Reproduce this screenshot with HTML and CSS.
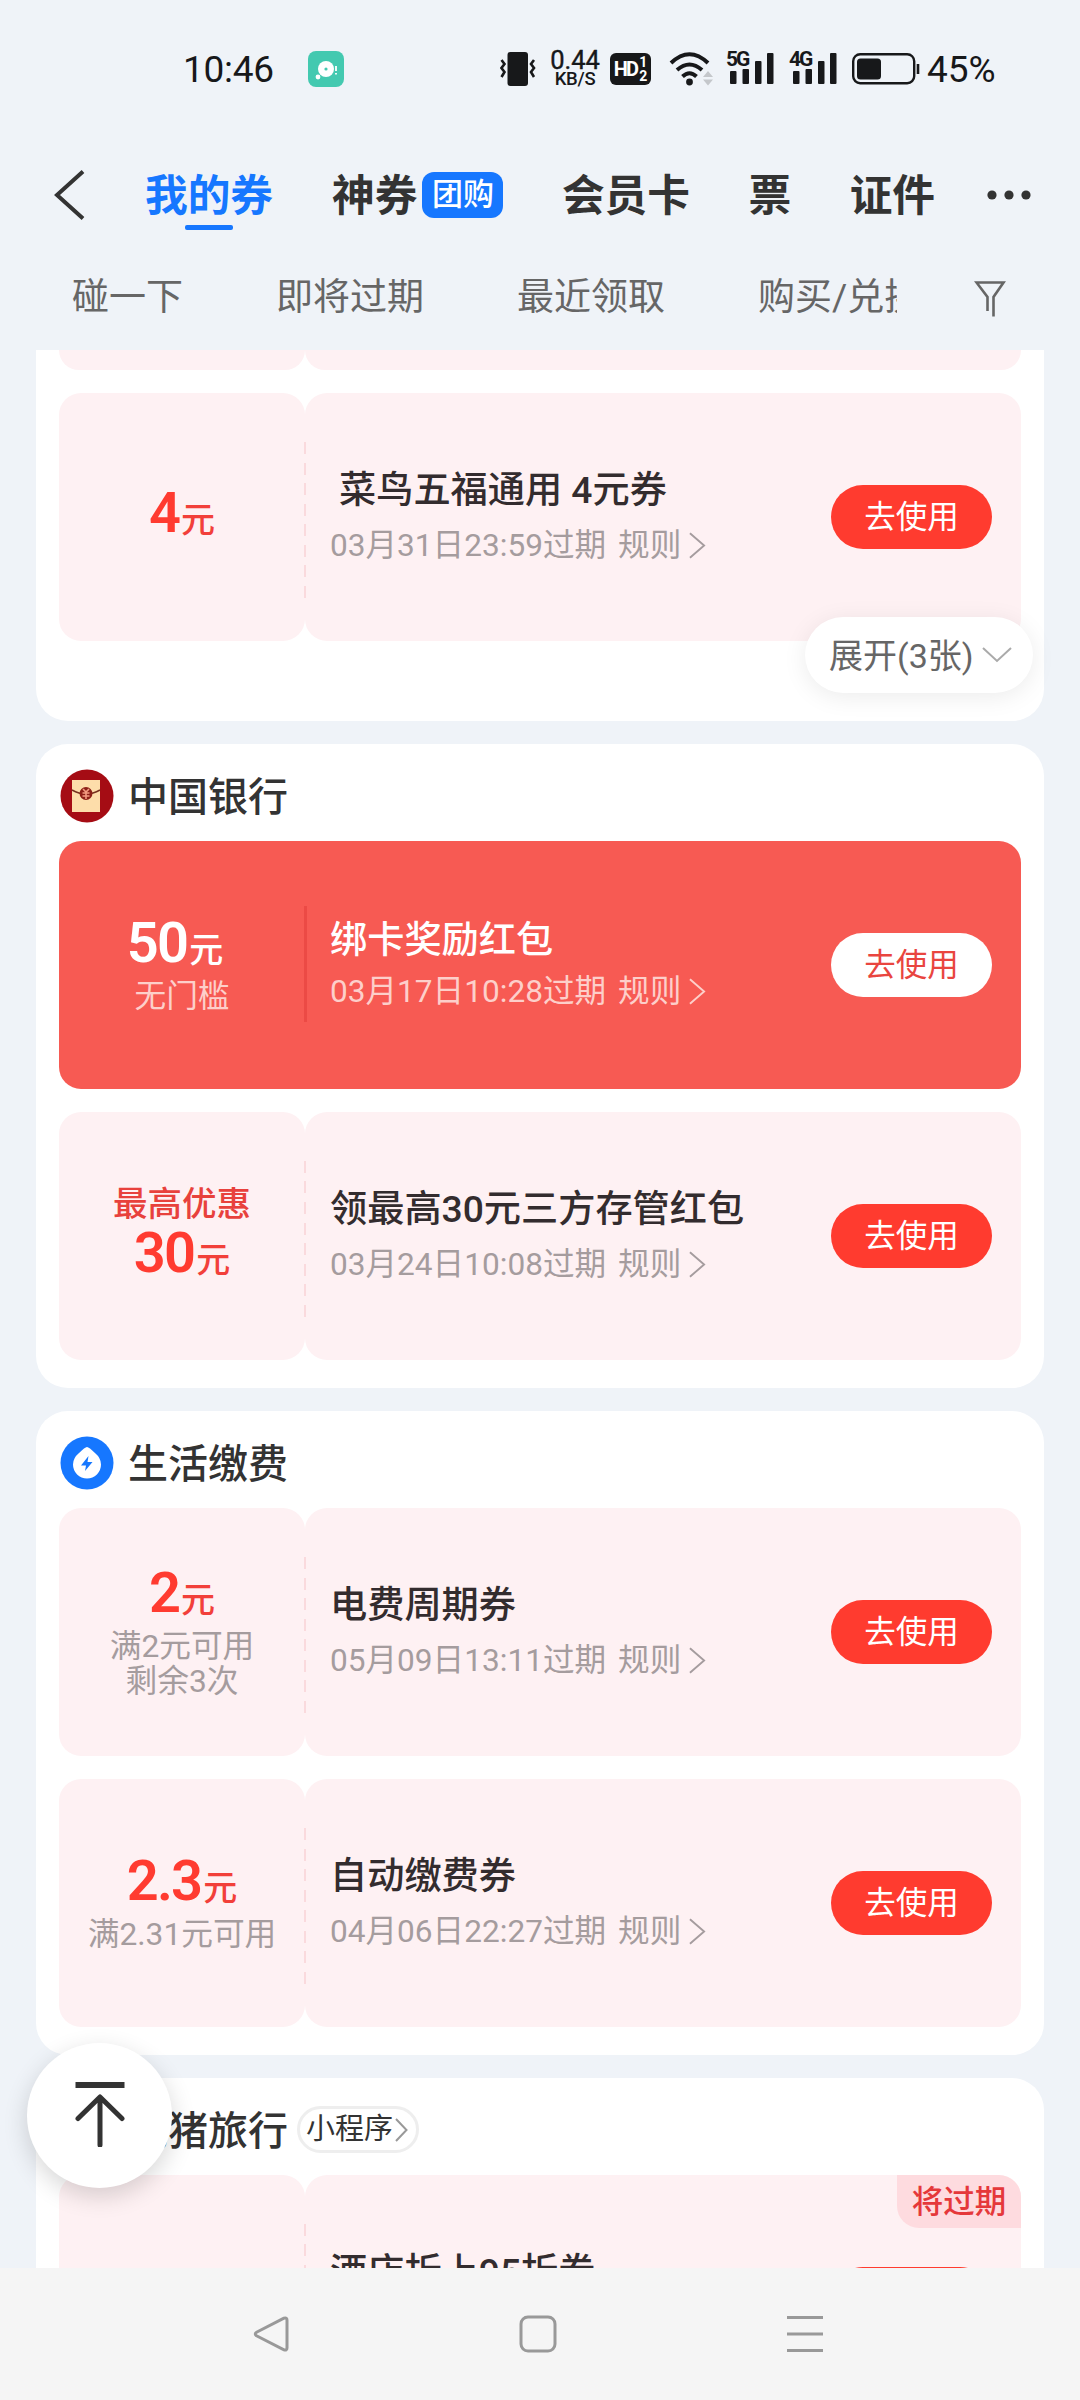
FILE: index.html
```html
<!DOCTYPE html>
<html lang="zh-CN">
<head>
<meta charset="utf-8">
<title>我的券</title>
<link rel="stylesheet" href="styles.css">
</head>
<body>
<div class="screen">
  <header class="status">
    <span class="clock">10:46</span>
    <svg class="app-icon" width="36" height="36" viewBox="0 0 36 36"><rect width="36" height="36" rx="8" fill="#43c9b0"/><circle cx="18" cy="18" r="8" fill="#fff"/><circle cx="18" cy="18" r="1.600" fill="#43c9b0"/><circle cx="10" cy="26" r="2.400" fill="#fff"/><path d="M28 15v5M28 22v1.500" stroke="#fff" stroke-width="1.800"/></svg>
    <svg class="vibrate" width="36" height="36" viewBox="0 0 36 36" fill="none" stroke="#17181a" stroke-width="2.600"><rect x="7.500" y="1" width="20.500" height="34" rx="3" fill="#17181a" stroke="none"/><path d="M1.500 9l3 4-3 4 3 4-3 5M34 9l-3 4 3 4-3 4 3 5"/></svg>
    <span class="speed"><b>0.44</b><i>KB/S</i></span>
    <span class="hd"><b>HD</b><span><i>1</i><i>2</i></span></span>
    <svg class="wifi" width="46" height="36" viewBox="0 0 46 36" fill="none" stroke="#17181a" stroke-width="4"><path d="M2 12Q20.500-5.500 39 12M8 19Q20.500 8 33 19M13.500 25.500Q20.500 19 27.500 25.500"/><circle cx="20.500" cy="31" r="3.400" fill="#17181a" stroke="none"/><path d="M34 26h10l-5-6zM34 28.500h10l-5 6z" fill="#c4c7cb" stroke="none"/></svg>
    <span class="signal"><b>5G</b><svg width="44" height="31" viewBox="0 0 44 31" fill="#17181a"><rect y="18" width="6.500" height="13" rx="1"/><rect x="12.500" y="16" width="6.500" height="15" rx="1"/><rect x="25" y="8" width="6.500" height="23" rx="1"/><rect x="37" width="6.500" height="31" rx="1"/></svg></span>
    <span class="signal"><b>4G</b><svg width="44" height="31" viewBox="0 0 44 31" fill="#17181a"><rect y="18" width="6.500" height="13" rx="1"/><rect x="12.500" y="16" width="6.500" height="15" rx="1"/><rect x="25" y="8" width="6.500" height="23" rx="1"/><rect x="37" width="6.500" height="31" rx="1"/></svg></span>
    <svg class="battery" width="68" height="32" viewBox="0 0 68 32"><rect x="1.200" y="1.200" width="61" height="29" rx="7" fill="none" stroke="#17181a" stroke-width="2.400"/><rect x="5" y="5.500" width="24" height="21" rx="3.500" fill="#17181a"/><path d="M66 11v10" stroke="#17181a" stroke-width="2.600"/></svg>
    <span class="percent">45%</span>
  </header>

  <nav class="nav">
    <svg class="back" width="32" height="50" viewBox="0 0 32 50" fill="none" stroke="#333" stroke-width="4"><path d="M29 1.500L3 25l26 23.500"/></svg>
    <span class="nav-item active">我的券</span>
    <span class="nav-item deals">神券</span>
    <span class="badge">团购</span>
    <span class="nav-item member">会员卡</span>
    <span class="nav-item ticket">票</span>
    <span class="nav-item cert">证件</span>
    <svg class="more" width="44" height="10" viewBox="0 0 44 10" fill="#333"><circle cx="5" cy="5" r="4.600"/><circle cx="22" cy="5" r="4.600"/><circle cx="39" cy="5" r="4.600"/></svg>
  </nav>

  <div class="tabs">
    <span>碰一下</span><span>即将过期</span><span>最近领取</span><span class="cut">购买/兑换</span>
    <svg class="filter" width="32" height="38" viewBox="0 0 32 38" fill="none" stroke="#666" stroke-width="2.600"><path d="M13.500 31V17L2.500 2.500h27L19.500 17v19.500"/></svg>
  </div>

  <main class="list">
    <section class="card card-first">
      <div class="coupon stub"><div class="value"></div><div class="detail"></div></div>
      <div class="coupon">
        <div class="value"><p class="price">4<small>元</small></p></div>
        <div class="detail">
          <div class="info"><h3 class="indent">菜鸟五福通用 4元券</h3><p class="rule">03月31日23:59过期 <span>规则</span><svg width="17" height="27" viewBox="0 0 18 28"><path d="M1 1l15 13L1 27"/></svg></p></div>
          <a class="use">去使用</a>
        </div>
      </div>
      <div class="expand">展开(3张)<svg width="30" height="16" viewBox="0 0 30 16"><path d="M1 1l14 13L29 1"/></svg></div>
    </section>

    <section class="card">
      <h2 class="brand"><svg width="54" height="54" viewBox="0 0 54 54"><circle cx="27" cy="27" r="26.500" fill="#a50c14"/><path d="M12 11h28v32H12z" fill="#fdddaa"/><path d="M12 21q7 4 14 4t14-4" fill="none" stroke="#75301e" stroke-width="1.500"/><circle cx="26" cy="24.500" r="6.500" fill="#8d2018"/><path d="M23 20l3 3 3-3M26 22v8M22.500 24h7M22.500 27h7" fill="none" stroke="#f29b80" stroke-width="1.600"/></svg>中国银行</h2>
      <div class="coupon solid">
        <div class="value"><p class="price shifted">50<small>元</small></p><p class="note">无门槛</p></div>
        <div class="detail">
          <div class="info"><h3>绑卡奖励红包</h3><p class="rule">03月17日10:28过期 <span>规则</span><svg width="17" height="27" viewBox="0 0 18 28"><path d="M1 1l15 13L1 27"/></svg></p></div>
          <a class="use">去使用</a>
        </div>
      </div>
      <div class="coupon">
        <div class="value"><p class="lead">最高优惠</p><p class="price">30<small>元</small></p></div>
        <div class="detail">
          <div class="info"><h3>领最高30元三方存管红包</h3><p class="rule">03月24日10:08过期 <span>规则</span><svg width="17" height="27" viewBox="0 0 18 28"><path d="M1 1l15 13L1 27"/></svg></p></div>
          <a class="use">去使用</a>
        </div>
      </div>
    </section>

    <section class="card">
      <h2 class="brand"><svg width="54" height="54" viewBox="0 0 54 54"><circle cx="27" cy="27" r="26.500" fill="#1677ff"/><path d="M27 11q2 0 8 6 6 5 6 11.500a14 14 0 0 1-28 0q0-6.500 6-11.500 6-6 8-6z" fill="#fff"/><path d="M28.500 20l-7.500 9.500h5l-1 5.500 7.500-9h-5z" fill="#1677ff"/></svg>生活缴费</h2>
      <div class="coupon">
        <div class="value"><p class="price">2<small>元</small></p><p class="note">满2元可用<br>剩余3次</p></div>
        <div class="detail">
          <div class="info"><h3>电费周期券</h3><p class="rule">05月09日13:11过期 <span>规则</span><svg width="17" height="27" viewBox="0 0 18 28"><path d="M1 1l15 13L1 27"/></svg></p></div>
          <a class="use">去使用</a>
        </div>
      </div>
      <div class="coupon">
        <div class="value"><p class="price">2.3<small>元</small></p><p class="note">满2.31元可用</p></div>
        <div class="detail">
          <div class="info"><h3>自动缴费券</h3><p class="rule">04月06日22:27过期 <span>规则</span><svg width="17" height="27" viewBox="0 0 18 28"><path d="M1 1l15 13L1 27"/></svg></p></div>
          <a class="use">去使用</a>
        </div>
      </div>
    </section>

    <section class="card">
      <h2 class="brand"><svg width="54" height="54" viewBox="0 0 54 54"><circle cx="27" cy="27" r="26.500" fill="#ffc900"/></svg>飞猪旅行<span class="mini">小程序<svg width="13" height="24" viewBox="0 0 13 24"><path d="M1 1l10.500 11L1 23"/></svg></span></h2>
      <div class="coupon">
        <div class="value"></div>
        <div class="detail">
          <div class="info"><h3>酒店折上95折券</h3><p class="rule">&nbsp;</p></div>
          <a class="use"></a>
          <span class="tag">将过期</span>
        </div>
      </div>
    </section>

    <a class="to-top"><svg width="52" height="66" viewBox="0 0 52 66" fill="none" stroke="#333" stroke-width="5"><path d="M1.500 4h49" stroke-width="6"/><path d="M26 64V17M4 37.500L26 16l22 21.500" stroke-linecap="round" stroke-linejoin="round"/></svg></a>
  </main>

  <footer class="sysbar">
    <svg width="36" height="38" viewBox="0 0 36 38"><path d="M31 3.200L4 17q-3.500 2 0 4L31 34.800q3 1 3-2V5.200q0-3-3-2z"/></svg>
    <svg width="38" height="38" viewBox="0 0 38 38"><rect x="2" y="2" width="34" height="34" rx="7"/></svg>
    <svg width="36" height="38" viewBox="0 0 36 38"><path d="M0 2.500h36M0 19h36M0 35.500h36"/></svg>
  </footer>
</div>
</body>
</html>
```
FILE: styles.css
```css
* { box-sizing: border-box; margin: 0; padding: 0; }
body { background: #eff3f8; font-family: Roboto, "Noto Sans CJK SC", sans-serif; }
i { font-style: normal; }
.screen { width: 1080px; height: 2400px; overflow: hidden; display: flex; flex-direction: column; background: #eff3f8; }

/* system status bar */
.status { height: 137px; flex: none; display: flex; align-items: center; padding-left: 183px; color: #17181a; }
.status svg { flex: none; }
.clock { width: 125px; font-size: 37px; letter-spacing: -0.300px; padding-top: 2px; }
.vibrate { margin-left: 156px; }
.speed { margin-left: 13px; width: 52px; display: flex; flex-direction: column; align-items: center; padding-top: 1px; }
.speed b { font-size: 25.500px; line-height: 20px; font-weight: 400; -webkit-text-stroke: 0.400px #17181a; }
.speed i { font-size: 18.500px; line-height: 18px; font-weight: 500; letter-spacing: -0.300px; }
.hd { margin-left: 9px; width: 41px; height: 32px; border-radius: 6px; background: #17181a; color: #fff; display: flex; align-items: center; justify-content: center; gap: 2px; }
.hd b { font-size: 20px; line-height: 30px; font-weight: 700; letter-spacing: -1.800px; }
.hd span { display: flex; flex-direction: column; }
.hd i { font-size: 14px; line-height: 14px; font-weight: 700; }
.wifi { margin-left: 18px; }
.signal { position: relative; width: 44px; height: 31px; margin-left: 15px; }
.signal + .signal { margin-left: 19px; }
.signal b { position: absolute; left: -4px; top: -3px; font-size: 21px; line-height: 18px; font-weight: 700; letter-spacing: -2px; }
.battery { margin-left: 15px; }
.percent { margin-left: 7px; font-size: 37px; letter-spacing: 0; padding-top: 2px; }

/* top navigation */
.nav { height: 115px; flex: none; display: flex; align-items: center; padding-left: 54px; color: #333; }
.nav-item { font-size: 42.700px; line-height: 58px; font-weight: 700; white-space: nowrap; padding-top: 3px; }
.active { position: relative; margin-left: 59px; color: #1677ff; }
.active::after { content: ""; position: absolute; left: 40px; bottom: -5px; width: 48px; height: 5px; border-radius: 2px; background: #1677ff; }
.deals { margin-left: 59px; }
.badge { margin-left: 5px; width: 81px; height: 46px; border-radius: 12px; background: #1677ff; color: #fff; font-size: 31px; line-height: 46px; font-weight: 500; text-align: center; }
.member, .ticket, .cert { margin-left: 58.500px; }
.more { margin-left: 52px; }

/* filter tabs */
.tabs { height: 98px; flex: none; display: flex; align-items: center; gap: 93px; padding: 0 0 7px 72px; color: #666; font-size: 37px; line-height: 50px; white-space: nowrap; }
.tabs > * { flex: none; }
.cut { width: 139px; overflow: hidden; }
.filter { margin: 3px 0 0 -16px; }

/* coupon list */
.list { position: relative; flex: 1; overflow: hidden; padding: 0 36px; display: flex; flex-direction: column; gap: 23.300px; }
.card { flex: none; position: relative; background: #fff; border-radius: 32px; padding: 0 23px 28px; display: flex; flex-direction: column; gap: 23px; }
.card-first { height: 370.500px; border-radius: 0 0 32px 32px; padding-bottom: 0; }
.brand { height: 97px; margin-bottom: -23px; padding-top: 3px; display: flex; align-items: center; gap: 14px; font-size: 40px; font-weight: 500; color: #333; }
.brand > svg { margin: 4px 0 0 1px; }
.mini { margin: 3px 0 0 -5px; width: 122px; height: 47px; border: 3px solid #eee; border-radius: 24px; font-size: 29px; font-weight: 400; line-height: 41px; padding-left: 6px; display: flex; align-items: center; gap: 2px; white-space: nowrap; }
.mini svg, .rule svg, .expand svg { fill: none; stroke: currentColor; stroke-width: 2; }
.mini svg { color: #999; }

.coupon { position: relative; height: 248px; display: flex; }
.value { width: 246px; border-radius: 22px; background: #fef1f3; display: flex; flex-direction: column; align-items: center; justify-content: center; text-align: center; }
.detail { flex: 1; border-radius: 22px; background: #fef1f3; display: flex; align-items: center; justify-content: space-between; padding: 0 29px 0 25px; position: relative; }
.detail::before { content: ""; position: absolute; left: -1px; top: 49px; width: 2px; height: 156px; background: repeating-linear-gradient(#fadadd 0 12px, transparent 12px 20.500px); }
.stub { height: 20px; }
.stub .value, .stub .detail { border-radius: 0 0 22px 22px; }
.stub .detail::before { display: none; }

.price { color: #ff3b30; font-size: 56px; line-height: 55px; font-weight: 600; letter-spacing: -1.800px; }
.price small { font-size: 34px; font-weight: 500; letter-spacing: 0; margin-left: 2px; color: #f2403a; }
.lead { color: #e8413c; font-size: 34.500px; line-height: 40px; font-weight: 500; margin-bottom: 2px; }
.note { color: #a59c9e; font-size: 31.700px; line-height: 35px; margin-top: 1px; }
.shifted { margin-left: -14px; }

.info h3 { font-size: 37.200px; line-height: 55px; padding-top: 2px; font-weight: 500; color: #332c2e; white-space: pre; }
.info .indent { padding-left: 9px; }
.rule { display: flex; align-items: center; font-size: 31.600px; line-height: 55px; color: #a59c9e; white-space: nowrap; }
.rule span { margin-left: 12px; margin-right: 8px; }
.use { width: 161px; height: 64px; border-radius: 32px; background: #ff3b2f; color: #fff; font-size: 31.500px; line-height: 66px; text-align: center; }

.solid { border-radius: 22px; background: #f75a53; }
.solid .value, .solid .detail { background: none; }
.solid .detail::before { top: 65px; width: 3px; height: 116px; left: -1px; background: #ec4a45; }
.solid .price, .solid .price small, .solid h3 { color: #fff; }
.solid h3, .solid .rule { line-height: 52px; }
.solid .note, .solid .rule { color: #fdcfca; }
.solid .use { background: #fff; color: #e9453f; }

.tag { position: absolute; right: 0; top: 0; width: 124px; height: 53px; border-radius: 0 22px 0 22px; background: #fedbdf; color: #e5383a; font-size: 31.500px; line-height: 55px; font-weight: 500; text-align: center; }
.expand { position: absolute; right: 11px; bottom: 28px; width: 228px; height: 76px; border-radius: 38px; background: #fff; box-shadow: 0 4px 24px rgba(0, 0, 0, 0.08); display: flex; align-items: center; gap: 8px; padding: 0 0 2px 24px; color: #666; font-size: 34px; white-space: nowrap; }
.expand svg { color: #aaa; margin-top: 3px; }
.to-top { position: absolute; left: 27px; top: 1693px; width: 145px; height: 145px; border-radius: 50%; background: #fff; box-shadow: 0 8px 24px rgba(0, 0, 0, 0.16); display: flex; align-items: center; justify-content: center; }
.to-top svg { margin-top: -3px; }

/* system navigation keys */
.sysbar { height: 132px; flex: none; background: #f5f5f5; display: flex; align-items: center; padding-left: 253px; }
.sysbar svg { fill: none; stroke: #999; stroke-width: 3; }
.sysbar svg + svg { margin-left: 230px; }
```
